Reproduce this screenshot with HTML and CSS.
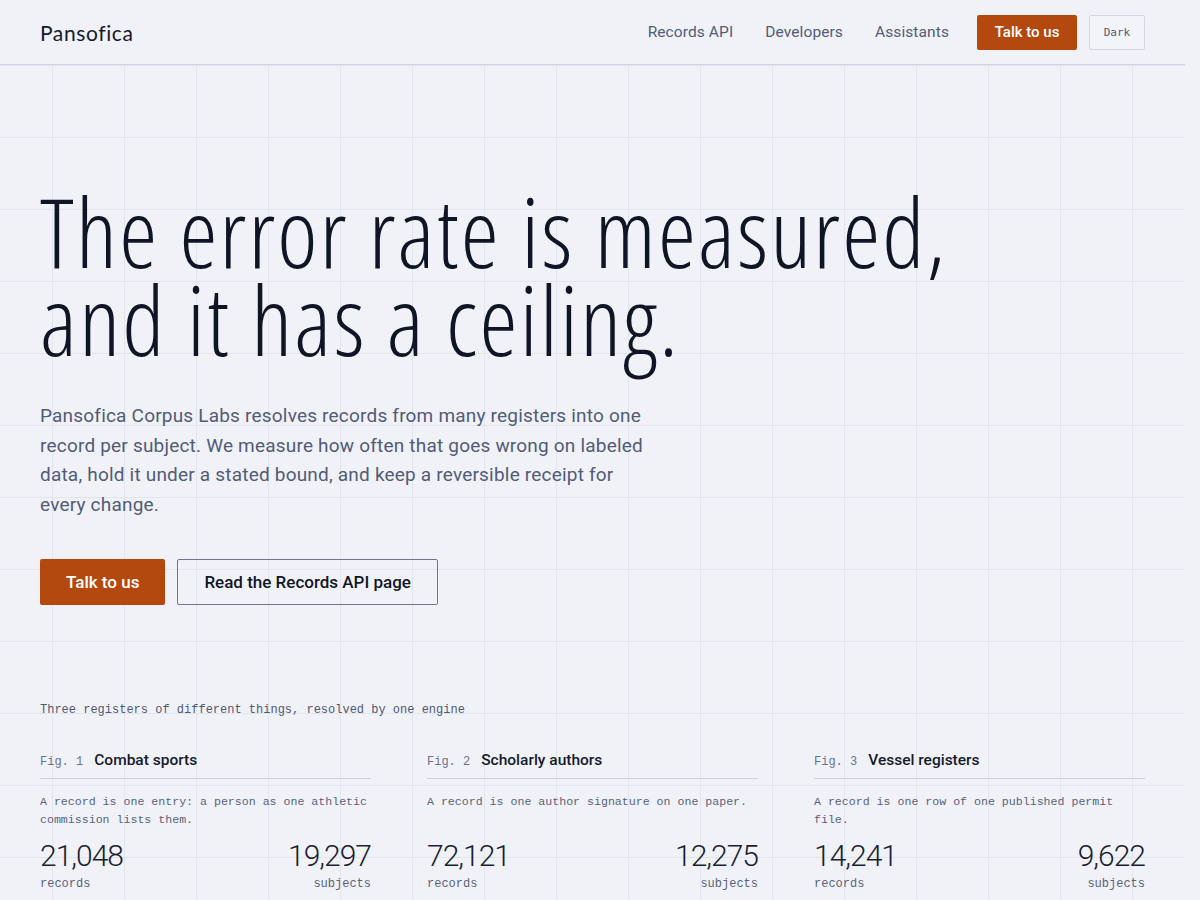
FILE: index.html
```html
<!DOCTYPE html>
<html lang="en">
<head>
<meta charset="utf-8">
<title>Pansofica</title>
<link rel="stylesheet" href="styles.css">
</head>
<body>
<header class="topbar">
  <div class="topbar-inner">
    <a class="logo" href="#">Pansofica</a>
    <nav class="nav">
      <a class="nav-link" href="#">Records API</a>
      <a class="nav-link" href="#">Developers</a>
      <a class="nav-link" href="#">Assistants</a>
      <a class="btn btn-primary btn-small" href="#">Talk to us</a>
      <button class="theme-toggle" type="button">Dark</button>
    </nav>
  </div>
</header>
<main class="page">
  <section class="hero">
    <h1 class="headline">The error rate is measured,<br>and it has a ceiling.</h1>
    <p class="lede">Pansofica Corpus Labs resolves records from many registers into one record per subject. We measure how often that goes wrong on labeled data, hold it under a stated bound, and keep a reversible receipt for every change.</p>
    <div class="actions">
      <a class="btn btn-primary btn-large" href="#">Talk to us</a>
      <a class="btn btn-outline btn-large" href="#">Read the Records API page</a>
    </div>
  </section>
  <section class="figures">
    <p class="caption">Three registers of different things, resolved by one engine</p>
    <div class="fig-grid">
      <figure class="fig">
        <div class="fig-head"><span class="fig-num">Fig. 1</span><span class="fig-title">Combat sports</span></div>
        <p class="fig-desc">A record is one entry: a person as one athletic commission lists them.</p>
        <div class="stats">
          <div class="stat"><span class="stat-value">21,048</span><span class="stat-label">records</span></div>
          <div class="stat stat-right"><span class="stat-value">19,297</span><span class="stat-label">subjects</span></div>
        </div>
      </figure>
      <figure class="fig">
        <div class="fig-head"><span class="fig-num">Fig. 2</span><span class="fig-title">Scholarly authors</span></div>
        <p class="fig-desc">A record is one author signature on one paper.</p>
        <div class="stats">
          <div class="stat"><span class="stat-value">72,121</span><span class="stat-label">records</span></div>
          <div class="stat stat-right"><span class="stat-value">12,275</span><span class="stat-label">subjects</span></div>
        </div>
      </figure>
      <figure class="fig">
        <div class="fig-head"><span class="fig-num">Fig. 3</span><span class="fig-title">Vessel registers</span></div>
        <p class="fig-desc">A record is one row of one published permit file.</p>
        <div class="stats">
          <div class="stat"><span class="stat-value">14,241</span><span class="stat-label">records</span></div>
          <div class="stat stat-right"><span class="stat-value">9,622</span><span class="stat-label">subjects</span></div>
        </div>
      </figure>
    </div>
  </section>
  <section class="more">
    <p class="caption">Measured against labeled pairs, reported with a bound</p>
  </section>
</main>
</body>
</html>
```

FILE: styles.css
```css
* { box-sizing: border-box; }

html {
  margin: 0;
  padding: 0;
  background: #f0f2f8;
}

body {
  margin: 0 15px 0 0;
  padding: 0;
  background-color: #f0f2f8;
  background-image:
    linear-gradient(to right, #e2e5ee 1px, transparent 1px),
    linear-gradient(to bottom, #e2e5ee 1px, transparent 1px);
  background-size: 72px 72px;
  background-position: -20px 65px;
  color: #111627;
  font-family: Roboto, "Liberation Sans", sans-serif;
}

a { text-decoration: none; color: inherit; }

.topbar {
  background: #f0f2f8;
  border-bottom: 1px solid #cfd4e2;
}

.topbar-inner {
  height: 64px;
  padding: 0 40px;
  display: flex;
  align-items: center;
  justify-content: space-between;
}

.logo {
  font-family: Lato, sans-serif;
  font-size: 21px;
  letter-spacing: 0.6px;
  color: #151a2c;
}

.nav {
  display: flex;
  align-items: center;
}

.nav-link {
  font-size: 15.5px;
  letter-spacing: 0.1px;
  color: #525b77;
  margin-right: 32px;
}

.nav-link:nth-child(3) { margin-right: 28px; }

.btn {
  display: inline-flex;
  align-items: center;
  justify-content: center;
  border-radius: 2px;
}

.btn-primary {
  background: #b3490f;
  color: #ffffff;
  font-weight: 500;
}

.btn-small {
  height: 35px;
  width: 100px;
  font-size: 15px;
}

.theme-toggle {
  margin-left: 12px;
  height: 35px;
  width: 56px;
  background: #f3f4f9;
  border: 1px solid #d3d7e3;
  border-radius: 2px;
  font-family: "DejaVu Sans Mono", monospace;
  font-size: 11px;
  color: #505973;
  padding: 0;
}

.page {
  padding: 0 40px;
}

.hero {
  padding-top: 122px;
}

.headline {
  margin: 0;
  font-family: "Open Sans", sans-serif;
  font-weight: 300;
  font-stretch: 75%;
  font-size: 96px;
  line-height: 88px;
  letter-spacing: 2.2px;
  color: #101526;
}

.lede {
  margin: 38px 0 0;
  max-width: 615px;
  font-size: 19px;
  line-height: 29.6px;
  letter-spacing: 0.2px;
  color: #525b77;
}

.actions {
  margin-top: 40px;
  display: flex;
  gap: 12px;
}

.btn-large {
  height: 46px;
  font-size: 17px;
  padding: 0 26px;
}

.btn-outline {
  border: 1px solid #6d7592;
  color: #111627;
  font-weight: 500;
}

.figures {
  padding-top: 98px;
}

.caption {
  margin: 0;
  font-family: "Liberation Mono", monospace;
  font-size: 12px;
  color: #505973;
}

.fig-grid {
  margin-top: 34px;
  display: grid;
  grid-template-columns: repeat(3, 1fr);
  column-gap: 56px;
}

.fig { margin: 0; }

.fig-head {
  display: flex;
  align-items: baseline;
  gap: 11px;
  padding-bottom: 9px;
  border-bottom: 1px solid #cdd1dd;
}

.fig-num {
  font-family: "Liberation Mono", monospace;
  font-size: 12px;
  color: #697190;
}

.fig-title {
  font-size: 15.5px;
  font-weight: 500;
  color: #151a2c;
}

.fig-desc {
  margin: 14px 0 0;
  font-family: "Liberation Mono", monospace;
  font-size: 11.6px;
  line-height: 18px;
  color: #5a627c;
  min-height: 36px;
}

.stats {
  margin-top: 10px;
  display: flex;
  justify-content: space-between;
}

.stat {
  display: flex;
  flex-direction: column;
}

.stat-right { align-items: flex-end; }

.stat-value {
  font-family: Roboto, sans-serif;
  font-weight: 300;
  font-size: 30px;
  line-height: 34px;
  letter-spacing: -1px;
  color: #1a1f33;
}

.stat-label {
  font-family: "Liberation Mono", monospace;
  font-size: 12px;
  color: #5a627c;
  margin-top: 4px;
}

.more {
  padding: 80px 0 120px;
}
```
